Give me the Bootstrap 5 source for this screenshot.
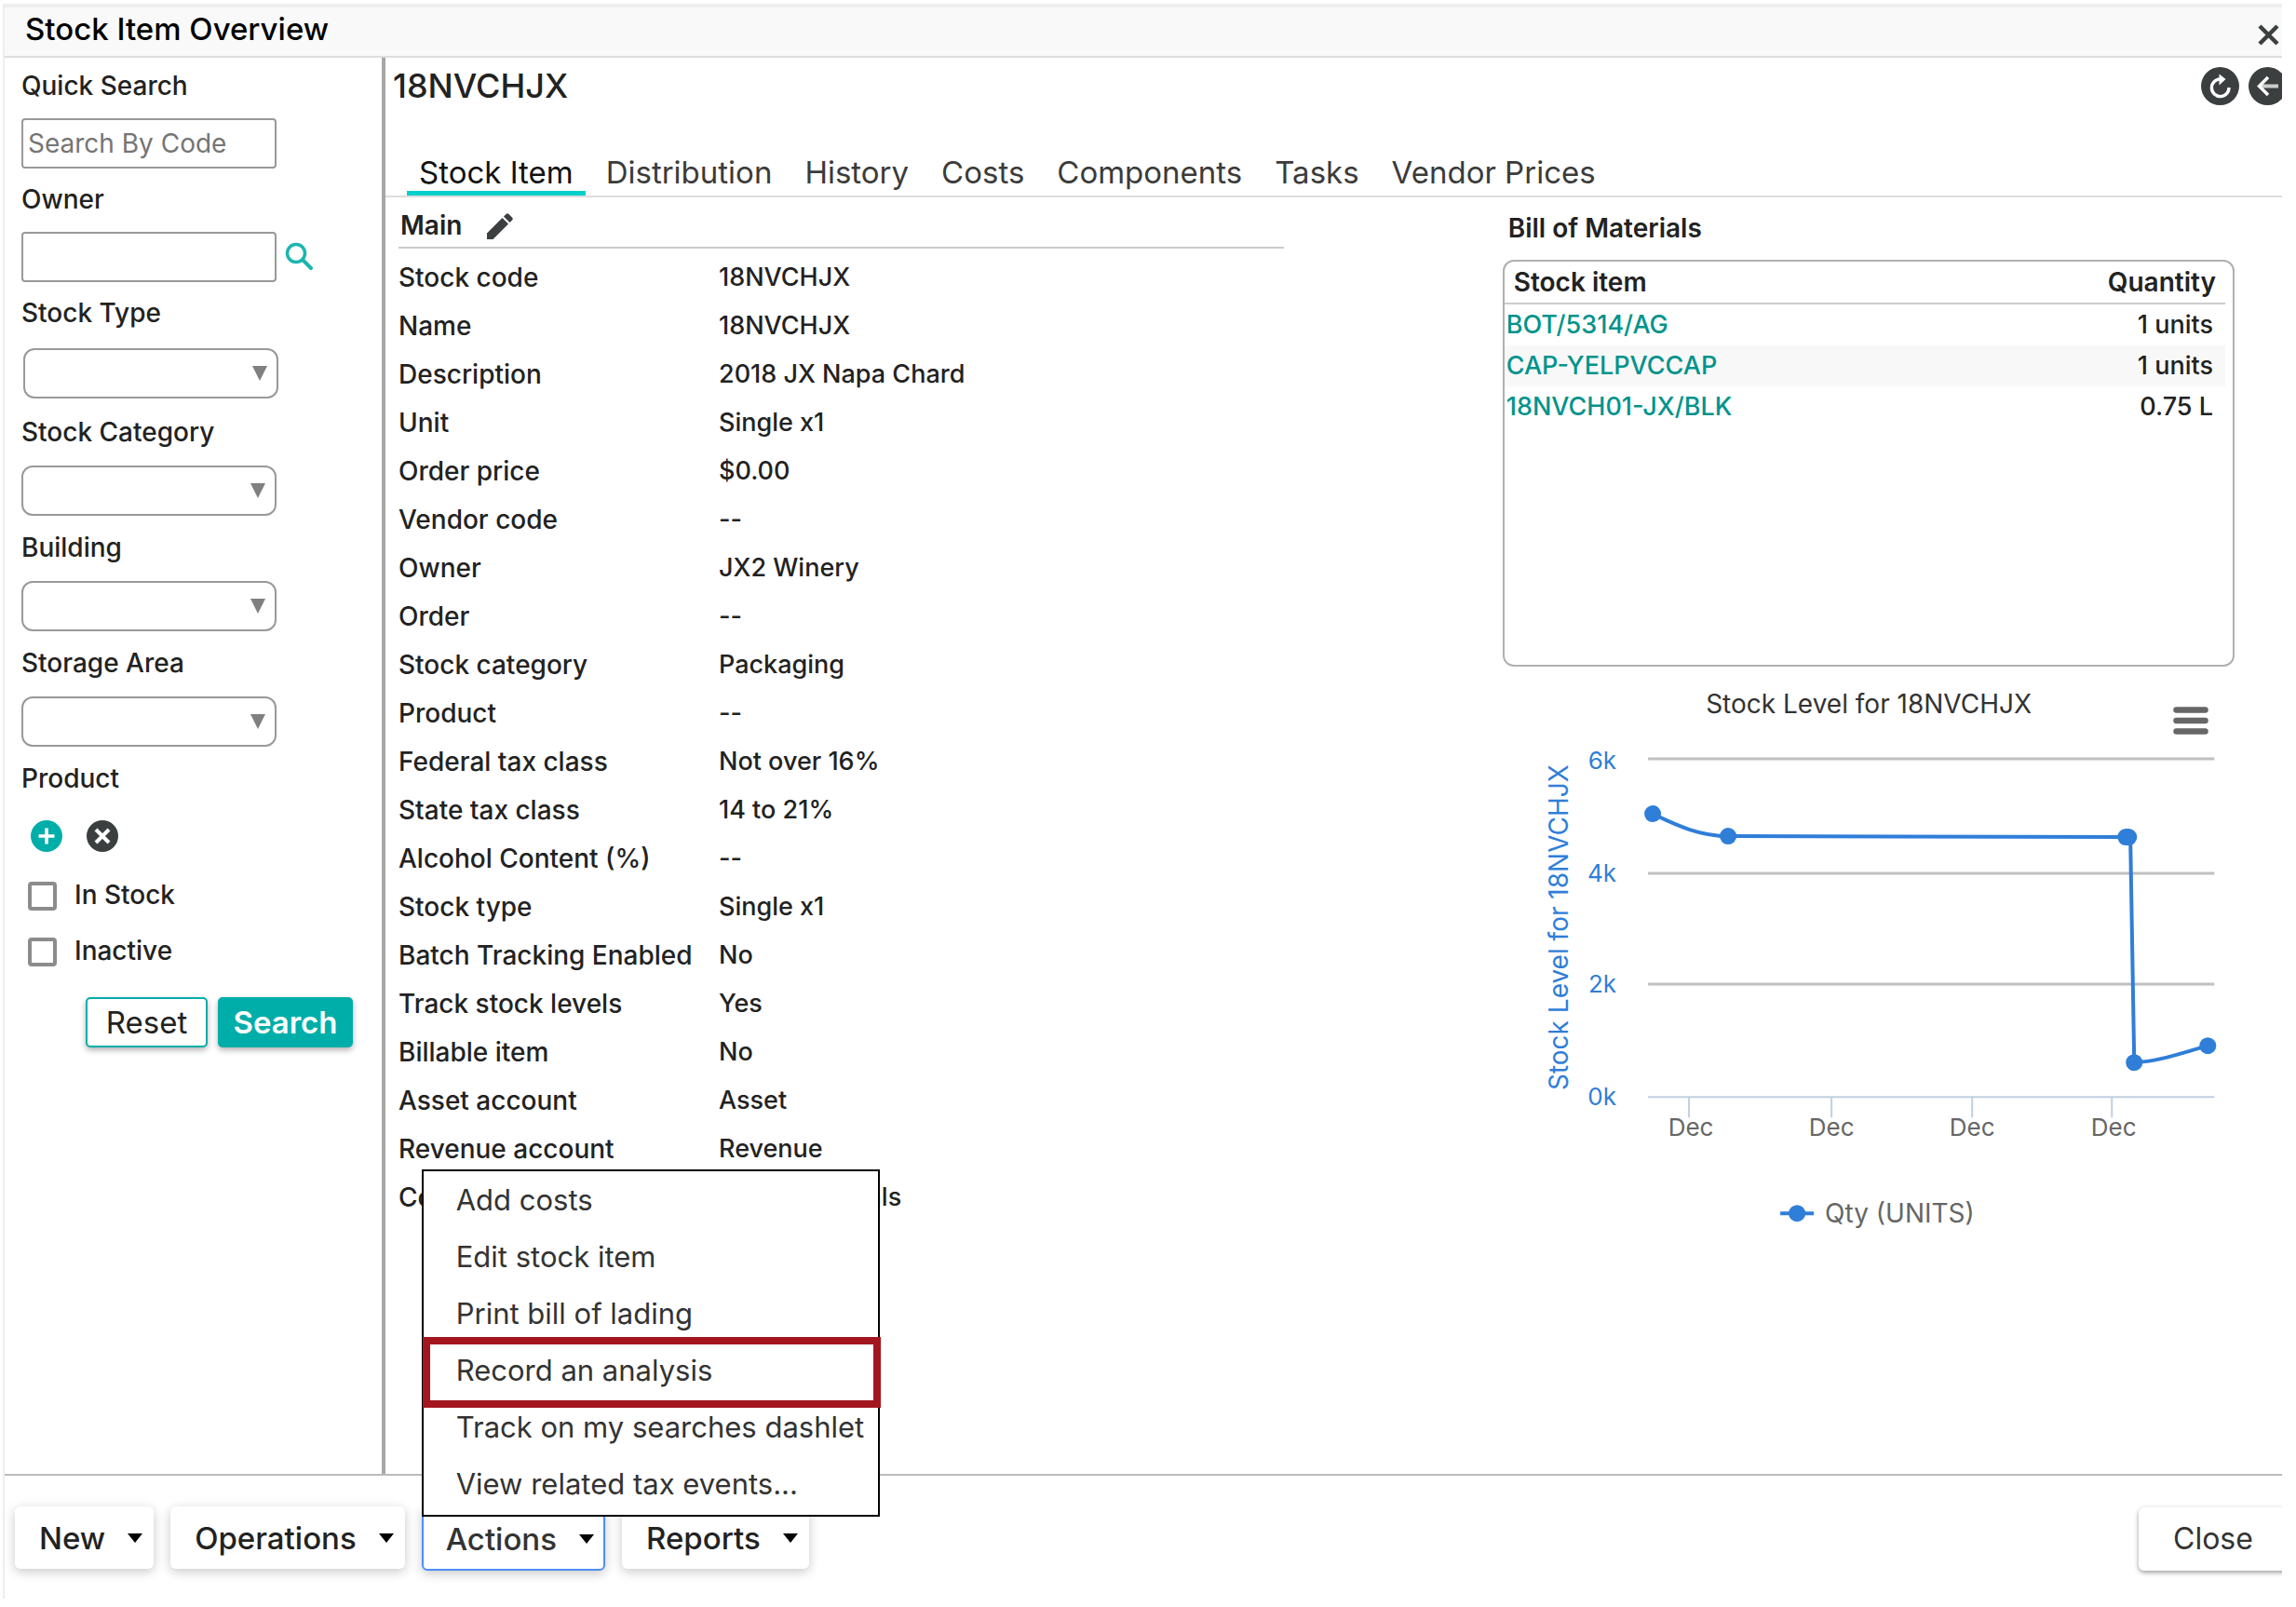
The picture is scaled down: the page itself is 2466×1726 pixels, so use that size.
<!DOCTYPE html>
<html lang="en">
<head>
<meta charset="utf-8">
<meta name="viewport" content="width=device-width, initial-scale=1">
<title>Stock Item Overview</title>
<link href="https://cdn.jsdelivr.net/npm/bootstrap@5.3.0/dist/css/bootstrap.min.css" rel="stylesheet">
<style>
  :root { --teal: #00aea9; --ink: #222; --rule: #ddd; --edge: #999; }
  body { font-family: Inter, "Liberation Sans", sans-serif; font-size: 28px; font-weight: 500; line-height: 36px; color: var(--ink); background: #fff; }
  .window-frame { min-height: calc(100vh - 13px); margin: 4px 15px 9px 3px; border-top: 4px solid #eee; border-left: 2px solid #eee; overflow: hidden; }
  .title-bar { height: 54px; padding-left: 22px; background: #f9f9f9; border-bottom: 2px solid var(--rule); }
  .title-bar h1 { font-size: 33px; font-weight: 500; line-height: 46px; color: #000; }
  .icon-btn { padding: 0; border: 0; background: none; line-height: 0; }
  .close-x { margin: 17px 2px 0 0; }

  .search-pane { width: 409px; padding: 11px 0 0 18px; border-right: 4px solid #aaa6a3; }
  .search-pane label, .search-pane .group-label { display: block; height: 36px; line-height: 38px; }
  .field { margin-bottom: 14px; }
  .field label { margin-bottom: 18px; }
  .field .form-control { width: 274px; height: 54px; padding: 0 5px; border: 2px solid var(--edge); border-radius: 4px; font-size: 28px; font-weight: 400; }
  .field .form-control::placeholder { color: #757575; }
  .pick { margin-bottom: 15px; }
  .pick label { margin-bottom: 19px; }
  .pick .form-select { width: 274px; height: 54px; border: 2px solid var(--edge); border-radius: 12px; font-size: 28px;
    background-image: url("data:image/svg+xml,%3Csvg xmlns='http://www.w3.org/2000/svg' viewBox='0 0 16 16'%3E%3Cpath d='M0 0h16L8 16z' fill='%23808080'/%3E%3C/svg%3E");
    background-size: 16px 16px; background-position: right 10px center; }
  .pick-type .form-select { margin: 21px 0 17px 2px; }
  .pick-type label { margin-bottom: 0; }
  .product-tools { margin: 28px 0 17px 10px; gap: 26px; }
  .search-pane .tick-row { height: 60px; padding: 0 0 0 7px; gap: 19px; }
  .search-pane .tick-row label { line-height: 34px; }
  .tick-row .form-check-input { float: none; width: 31px; height: 31px; margin: 0; border: 4px solid #8c8c8c; border-radius: 4px; }
  .search-actions { margin: 19px 0 0 69px; gap: 11px; }
  .search-actions .btn { height: 54px; padding: 0 18px; border: 2px solid var(--teal); border-radius: 5px; font-size: 33px; line-height: 48px; box-shadow: 0 3px 6px rgba(0,0,0,.3); }
  .btn-reset { min-width: 131px; background: #fff; color: var(--ink); font-weight: 400; }
  .search-actions .btn-find { min-width: 145px; padding: 0 14px; background: var(--teal); color: #fff; font-weight: 600; }

  .item-head { height: 60px; padding-left: 8px; }
  .item-head h2 { font-size: 36px; font-weight: 500; line-height: 44px; }
  .round-tools { gap: 10px; margin-right: -5px; }
  .item-tabs { margin-top: 36px; padding-left: 23px; gap: 9px; border-bottom: 2px solid var(--rule); }
  .item-tabs .nav-link { padding: 7px 13px 0; border: 0; border-bottom: 5px solid transparent; border-radius: 0; margin: 0; font-size: 33px; font-weight: 400; line-height: 40px; color: #3b3b3b; background: none; }
  .item-tabs .nav-link.active { border-bottom-color: #00cfcb; color: #111; background: none; }

  .detail-col { width: 46.7%; margin-left: 14px; }
  .section-title { gap: 27px; height: 55px; padding: 8px 0 0 2px; border-bottom: 2px solid #ccc; font-size: 28px; font-weight: 600; line-height: 45px; }
  .section-title h3, .bom-title { font-size: 28px; font-weight: 600; margin: 0; }
  .detail-list { margin: 5px 0 0; }
  .detail-list > div { height: 52px; }
  .detail-list dt { width: 344px; font-weight: 500; white-space: nowrap; }
  .detail-list dd { margin: 0; font-size: 27px; }

  .side-col { width: 38.6%; margin-right: 51px; }
  .bom-title { padding: 15px 0 16px 6px; line-height: 36px; }
  .bom-box { height: 437px; padding-right: 8px; border: 2px solid #b0b0b0; border-radius: 12px; }
  .bom-table { width: 100%; font-size: 27px; line-height: 44px; }
  .bom-table th { padding: 0 10px; font-size: 28px; font-weight: 600; border-bottom: 2px solid #ccc; }
  .bom-table td { padding: 0 13px 0 2px; }
  .bom-table tbody tr:nth-child(even) { background: #f8f8f8; }
  .bom-table a { color: #00938c; text-decoration: none; }
  .chart-menu { top: 43px; right: 28px; }
  .chart-svg { display: block; width: 100%; font-family: Inter, "Liberation Sans", sans-serif; font-size: 26px; font-weight: 400; }

  .action-bar { padding: 33px 0 30px 11px; gap: 18px; border-top: 2px solid #bbb; }
  .action-bar .bar-btn { height: 67px; padding: 0 12px 0 26px; gap: 24px; border: 0; border-radius: 6px; background: #fff; color: var(--ink); font-size: 33px; font-weight: 500; box-shadow: 0 3px 12px rgba(0,0,0,.22); }
  .action-bar .bar-btn::after { content: ""; border: 8px solid transparent; border-top: 10px solid #000; border-bottom: 0; margin: 0; }
  .action-bar .bar-btn.is-open { height: 69px; padding: 0 10px 0 24px; border: 2px solid #4b8df8; color: #333; }
  .action-bar .close-btn { height: 68px; width: 174px; margin: 1px -20px 0 auto; padding: 0 0 0 37px; border: 0; border-radius: 6px; background: #fff; color: #333; font-size: 32px; font-weight: 400; text-align: left; box-shadow: 0 2px 5px rgba(0,0,0,.4); }
  .action-menu { bottom: 58px; left: 0; width: 492px; padding: 0 0 3px; border: 2px solid #000; border-radius: 0; background: #fff; margin: 0; }
  .action-menu .dropdown-item { height: 61px; padding: 0 0 0 35px; font-size: 31px; font-weight: 400; line-height: 61px; color: #333; }
  .marked-item::after { content: ""; position: absolute; inset: -5px -3px -10px -1px; border: 8px solid #a3161f; pointer-events: none; }
</style>
</head>
<body>
<div class="window-frame d-flex flex-column">
  <header class="title-bar d-flex justify-content-between align-items-start">
    <h1 class="m-0">Stock Item Overview</h1>
    <button type="button" class="icon-btn close-x" aria-label="Close window">
      <svg width="25" height="25" viewBox="0 0 25 25"><path d="M3 3l19 19M22 3L3 22" stroke="#3c3f3f" stroke-width="4.500"/></svg>
    </button>
  </header>

  <div class="d-flex flex-grow-1">
    <form class="search-pane flex-shrink-0">
      <div class="field">
        <label for="code">Quick Search</label>
        <input class="form-control" id="code" type="text" placeholder="Search By Code">
      </div>
      <div class="field">
        <label for="owner">Owner</label>
        <div class="d-flex align-items-center gap-2">
          <input class="form-control" id="owner" type="text">
          <button type="button" class="icon-btn" aria-label="Find owner">
            <svg width="34" height="34" viewBox="0 0 34 34" fill="none" stroke="#1cb5b0"><circle cx="13" cy="13" r="9.500" stroke-width="3.500"/><path d="M20 20l9 9" stroke-width="4" stroke-linecap="round"/></svg>
          </button>
        </div>
      </div>
      <div class="pick pick-type">
        <label for="stype">Stock Type</label>
        <select class="form-select" id="stype"><option></option></select>
      </div>
      <div class="pick">
        <label for="scat">Stock Category</label>
        <select class="form-select" id="scat"><option></option></select>
      </div>
      <div class="pick">
        <label for="bldg">Building</label>
        <select class="form-select" id="bldg"><option></option></select>
      </div>
      <div class="pick">
        <label for="area">Storage Area</label>
        <select class="form-select" id="area"><option></option></select>
      </div>
      <div class="group-label">Product</div>
      <div class="product-tools d-flex">
        <button type="button" class="icon-btn" aria-label="Add product">
          <svg width="34" height="34" viewBox="0 0 34 34"><circle cx="17" cy="17" r="17" fill="#00aea9"/><path d="M17 8.500v17M8.500 17h17" stroke="#fff" stroke-width="3.600"/></svg>
        </button>
        <button type="button" class="icon-btn" aria-label="Clear product">
          <svg width="34" height="34" viewBox="0 0 34 34"><circle cx="17" cy="17" r="17" fill="#3c3f3f"/><path d="M10 10l14 14M24 10L10 24" stroke="#fff" stroke-width="4"/></svg>
        </button>
      </div>
      <div class="tick-row form-check d-flex align-items-center m-0">
        <input class="form-check-input" type="checkbox" id="instock"><label for="instock">In Stock</label>
      </div>
      <div class="tick-row form-check d-flex align-items-center m-0">
        <input class="form-check-input" type="checkbox" id="inactive"><label for="inactive">Inactive</label>
      </div>
      <div class="search-actions d-flex">
        <button type="reset" class="btn btn-reset">Reset</button>
        <button type="button" class="btn btn-find">Search</button>
      </div>
    </form>

    <main class="flex-grow-1">
      <div class="item-head d-flex justify-content-between align-items-center">
        <h2 class="m-0">18NVCHJX</h2>
        <div class="round-tools d-flex">
          <button type="button" class="icon-btn" aria-label="Refresh">
            <svg width="41" height="41" viewBox="0 0 41 41"><circle cx="20.500" cy="20.500" r="20.500" fill="#3c3f3f"/><path d="M30 22A9.300 9.300 0 1 1 20.500 13" fill="none" stroke="#fff" stroke-width="3.400"/><path d="M19.500 7.500l7 5.500-7 6.500z" fill="#fff"/></svg>
          </button>
          <button type="button" class="icon-btn" aria-label="Back">
            <svg width="41" height="41" viewBox="0 0 41 41"><circle cx="20.500" cy="20.500" r="20.500" fill="#3c3f3f"/><path d="M14 20.500h18" stroke="#ccc" stroke-width="4"/><path d="M21 11l-9.500 9.500L21 30" fill="none" stroke="#fff" stroke-width="3.400"/></svg>
          </button>
        </div>
      </div>
      <ul class="item-tabs nav">
        <li class="nav-item"><a class="nav-link active" href="#">Stock Item</a></li>
        <li class="nav-item"><a class="nav-link" href="#">Distribution</a></li>
        <li class="nav-item"><a class="nav-link" href="#">History</a></li>
        <li class="nav-item"><a class="nav-link" href="#">Costs</a></li>
        <li class="nav-item"><a class="nav-link" href="#">Components</a></li>
        <li class="nav-item"><a class="nav-link" href="#">Tasks</a></li>
        <li class="nav-item"><a class="nav-link" href="#">Vendor Prices</a></li>
      </ul>

      <div class="d-flex justify-content-between align-items-start">
        <section class="detail-col">
          <div class="section-title d-flex align-items-center">
            <h3>Main</h3>
            <button type="button" class="icon-btn" aria-label="Edit main details">
              <svg width="28" height="28" viewBox="0 0 28 28" fill="#3c3f3f"><path d="M0 28v-6.500L16.500 5l6.500 6.500L6.500 28zM18 3.500L20.500 1q1.500-1.500 3 0L27 4.500q1.500 1.500 0 3L24.500 10z"/></svg>
            </button>
          </div>
          <dl class="detail-list">
            <div class="d-flex align-items-center"><dt>Stock code</dt><dd>18NVCHJX</dd></div>
            <div class="d-flex align-items-center"><dt>Name</dt><dd>18NVCHJX</dd></div>
            <div class="d-flex align-items-center"><dt>Description</dt><dd>2018 JX Napa Chard</dd></div>
            <div class="d-flex align-items-center"><dt>Unit</dt><dd>Single x1</dd></div>
            <div class="d-flex align-items-center"><dt>Order price</dt><dd>$0.00</dd></div>
            <div class="d-flex align-items-center"><dt>Vendor code</dt><dd>--</dd></div>
            <div class="d-flex align-items-center"><dt>Owner</dt><dd>JX2 Winery</dd></div>
            <div class="d-flex align-items-center"><dt>Order</dt><dd>--</dd></div>
            <div class="d-flex align-items-center"><dt>Stock category</dt><dd>Packaging</dd></div>
            <div class="d-flex align-items-center"><dt>Product</dt><dd>--</dd></div>
            <div class="d-flex align-items-center"><dt>Federal tax class</dt><dd>Not over 16%</dd></div>
            <div class="d-flex align-items-center"><dt>State tax class</dt><dd>14 to 21%</dd></div>
            <div class="d-flex align-items-center"><dt>Alcohol Content (%)</dt><dd>--</dd></div>
            <div class="d-flex align-items-center"><dt>Stock type</dt><dd>Single x1</dd></div>
            <div class="d-flex align-items-center"><dt>Batch Tracking Enabled</dt><dd>No</dd></div>
            <div class="d-flex align-items-center"><dt>Track stock levels</dt><dd>Yes</dd></div>
            <div class="d-flex align-items-center"><dt>Billable item</dt><dd>No</dd></div>
            <div class="d-flex align-items-center"><dt>Asset account</dt><dd>Asset</dd></div>
            <div class="d-flex align-items-center"><dt>Revenue account</dt><dd>Revenue</dd></div>
            <div class="d-flex align-items-center"><dt>Cost account</dt><dd>Basic Materials</dd></div>
          </dl>
        </section>

        <section class="side-col">
          <h3 class="bom-title">Bill of Materials</h3>
          <div class="bom-box">
            <table class="bom-table">
              <thead><tr><th>Stock item</th><th class="text-end">Quantity</th></tr></thead>
              <tbody>
                <tr><td><a href="#">BOT/5314/AG</a></td><td class="text-end">1 units</td></tr>
                <tr><td><a href="#">CAP-YELPVCCAP</a></td><td class="text-end">1 units</td></tr>
                <tr><td><a href="#">18NVCH01-JX/BLK</a></td><td class="text-end">0.75 L</td></tr>
              </tbody>
            </table>
          </div>
          <div class="position-relative">
            <svg class="chart-svg" viewBox="0 0 786 620" role="img" aria-label="Stock level chart">
              <text x="393" y="50" text-anchor="middle" fill="#333" font-size="28">Stock Level for 18NVCHJX</text>
              <path d="M156 99h608M156 222h608M156 341h608" stroke="#c0c0c0" stroke-width="3"/>
              <path d="M156 462h608M200 462v22M353 462v22M504 462v22M654 462v22" stroke="#c0d0e0" stroke-width="2"/>
              <g fill="#2f7ed8" text-anchor="end">
                <text x="122" y="110">6k</text><text x="122" y="231">4k</text><text x="122" y="350">2k</text><text x="122" y="471">0k</text>
              </g>
              <text transform="translate(70 280) rotate(-90)" text-anchor="middle" fill="#2f7ed8" font-size="28">Stock Level for 18NVCHJX</text>
              <g fill="#666" text-anchor="middle">
                <text x="202" y="504">Dec</text><text x="353" y="504">Dec</text><text x="504" y="504">Dec</text><text x="656" y="504">Dec</text>
              </g>
              <path d="M161 158C190 172 213 182 242 182L670 183Q674 183 674 191L678 425C704 424 728 415 757 407" fill="none" stroke="#2f7ed8" stroke-width="4"/>
              <g fill="#2f7ed8">
                <circle cx="161" cy="158" r="9"/><circle cx="242" cy="182" r="9"/><circle cx="669" cy="183" r="9"/><circle cx="672" cy="183" r="9"/><circle cx="678" cy="425" r="9"/><circle cx="757" cy="407" r="9"/>
                <circle cx="316" cy="587" r="9"/>
              </g>
              <path d="M298 587h36" stroke="#2f7ed8" stroke-width="4"/>
              <text x="346" y="597" fill="#666" font-size="28">Qty (UNITS)</text>
            </svg>
            <button type="button" class="icon-btn chart-menu position-absolute" aria-label="Chart menu">
              <svg width="38" height="30" viewBox="0 0 38 30" stroke="#666" stroke-width="6.500" stroke-linecap="round"><path d="M3.500 3.500h31M3.500 15h31M3.500 26.500h31"/></svg>
            </button>
          </div>
        </section>
      </div>
    </main>
  </div>

  <footer class="action-bar d-flex align-items-start">
    <button type="button" class="bar-btn d-flex align-items-center">New</button>
    <button type="button" class="bar-btn d-flex align-items-center">Operations</button>
    <div class="dropup position-relative">
      <button type="button" class="bar-btn is-open d-flex align-items-center" aria-expanded="true">Actions</button>
      <ul class="action-menu dropdown-menu show">
        <li><a class="dropdown-item" href="#">Add costs</a></li>
        <li><a class="dropdown-item" href="#">Edit stock item</a></li>
        <li><a class="dropdown-item" href="#">Print bill of lading</a></li>
        <li class="marked-item position-relative"><a class="dropdown-item" href="#">Record an analysis</a></li>
        <li><a class="dropdown-item" href="#">Track on my searches dashlet</a></li>
        <li><a class="dropdown-item" href="#">View related tax events...</a></li>
      </ul>
    </div>
    <button type="button" class="bar-btn d-flex align-items-center">Reports</button>
    <button type="button" class="close-btn">Close</button>
  </footer>
</div>
<script src="https://cdn.jsdelivr.net/npm/bootstrap@5.3.0/dist/js/bootstrap.bundle.min.js"></script>
</body>
</html>
